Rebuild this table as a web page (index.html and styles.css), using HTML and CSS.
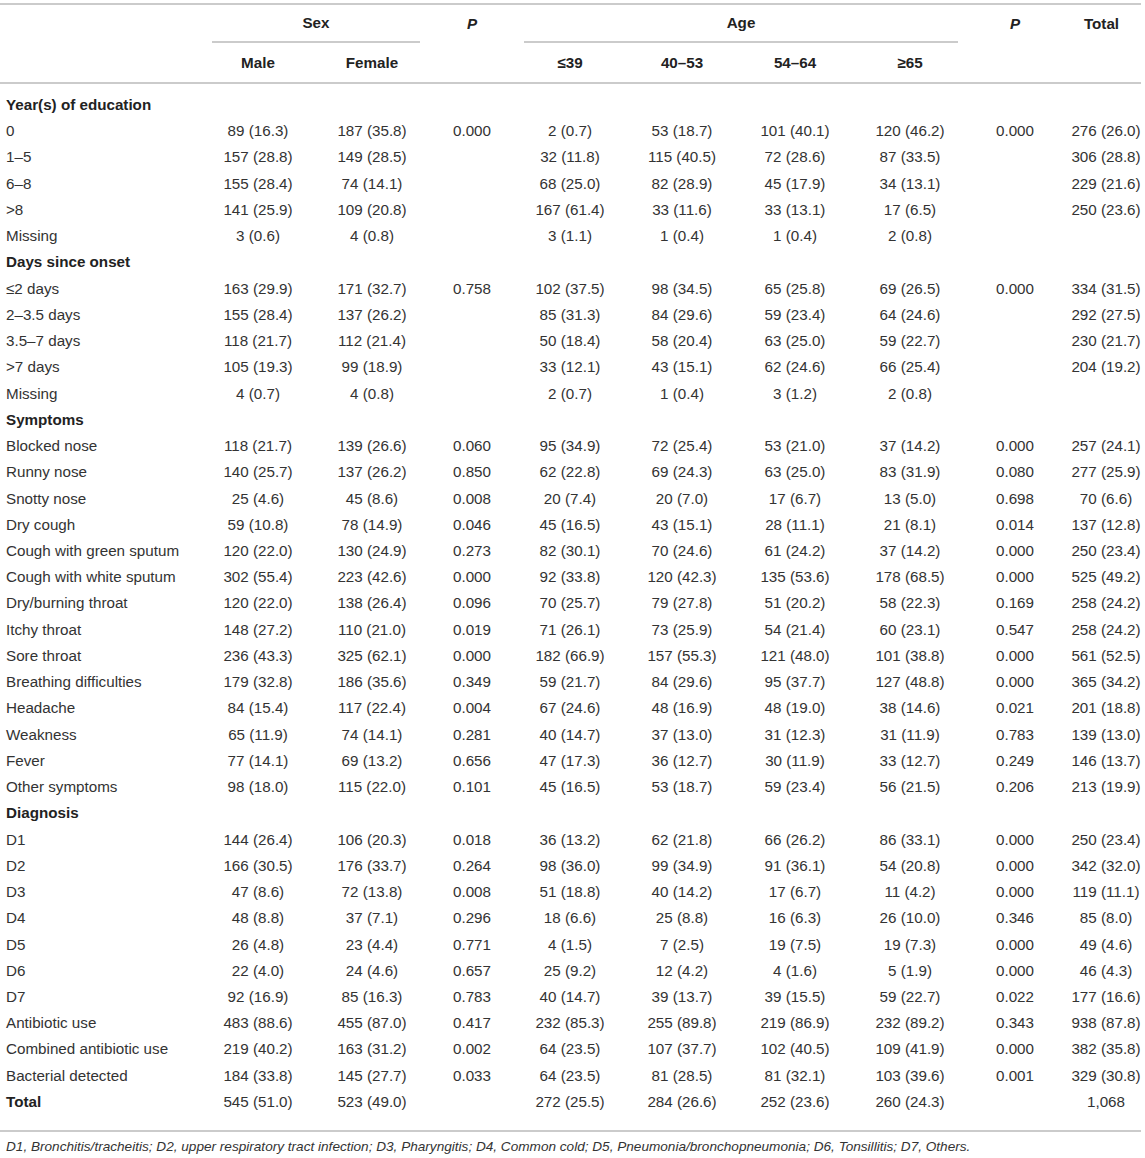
FILE: index.html
```html
<!DOCTYPE html>
<html>
<head>
<meta charset="utf-8">
<link rel="stylesheet" href="styles.css">
</head>
<body>
<div class="page">
<table class="tbl">
<colgroup>
<col class="c-label"><col class="c-male"><col class="c-female"><col class="c-p"><col class="c-a1"><col class="c-a2"><col class="c-a3"><col class="c-a4"><col class="c-p2"><col class="c-tot">
</colgroup>
<thead>
<tr class="h1">
<th class="empty" rowspan="2"></th>
<th colspan="2"><div class="grp">Sex</div></th>
<th rowspan="2" class="top"><i>P</i></th>
<th colspan="4"><div class="grp">Age</div></th>
<th rowspan="2" class="top"><i>P</i></th>
<th rowspan="2" class="top tot">Total</th>
</tr>
<tr class="h2">
<th>Male</th><th>Female</th>
<th>≤39</th><th>40–53</th><th>54–64</th><th>≥65</th>
</tr>
</thead>
<tbody>
<tr class="sec first"><td colspan="10">Year(s) of education</td></tr>
<tr><td>0</td><td>89 (16.3)</td><td>187 (35.8)</td><td>0.000</td><td>2 (0.7)</td><td>53 (18.7)</td><td>101 (40.1)</td><td>120 (46.2)</td><td>0.000</td><td class="tot">276 (26.0)</td></tr>
<tr><td>1–5</td><td>157 (28.8)</td><td>149 (28.5)</td><td></td><td>32 (11.8)</td><td>115 (40.5)</td><td>72 (28.6)</td><td>87 (33.5)</td><td></td><td class="tot">306 (28.8)</td></tr>
<tr><td>6–8</td><td>155 (28.4)</td><td>74 (14.1)</td><td></td><td>68 (25.0)</td><td>82 (28.9)</td><td>45 (17.9)</td><td>34 (13.1)</td><td></td><td class="tot">229 (21.6)</td></tr>
<tr><td>&gt;8</td><td>141 (25.9)</td><td>109 (20.8)</td><td></td><td>167 (61.4)</td><td>33 (11.6)</td><td>33 (13.1)</td><td>17 (6.5)</td><td></td><td class="tot">250 (23.6)</td></tr>
<tr><td>Missing</td><td>3 (0.6)</td><td>4 (0.8)</td><td></td><td>3 (1.1)</td><td>1 (0.4)</td><td>1 (0.4)</td><td>2 (0.8)</td><td></td><td class="tot"></td></tr>
<tr class="sec"><td colspan="10">Days since onset</td></tr>
<tr><td>≤2 days</td><td>163 (29.9)</td><td>171 (32.7)</td><td>0.758</td><td>102 (37.5)</td><td>98 (34.5)</td><td>65 (25.8)</td><td>69 (26.5)</td><td>0.000</td><td class="tot">334 (31.5)</td></tr>
<tr><td>2–3.5 days</td><td>155 (28.4)</td><td>137 (26.2)</td><td></td><td>85 (31.3)</td><td>84 (29.6)</td><td>59 (23.4)</td><td>64 (24.6)</td><td></td><td class="tot">292 (27.5)</td></tr>
<tr><td>3.5–7 days</td><td>118 (21.7)</td><td>112 (21.4)</td><td></td><td>50 (18.4)</td><td>58 (20.4)</td><td>63 (25.0)</td><td>59 (22.7)</td><td></td><td class="tot">230 (21.7)</td></tr>
<tr><td>&gt;7 days</td><td>105 (19.3)</td><td>99 (18.9)</td><td></td><td>33 (12.1)</td><td>43 (15.1)</td><td>62 (24.6)</td><td>66 (25.4)</td><td></td><td class="tot">204 (19.2)</td></tr>
<tr><td>Missing</td><td>4 (0.7)</td><td>4 (0.8)</td><td></td><td>2 (0.7)</td><td>1 (0.4)</td><td>3 (1.2)</td><td>2 (0.8)</td><td></td><td class="tot"></td></tr>
<tr class="sec"><td colspan="10">Symptoms</td></tr>
<tr><td>Blocked nose</td><td>118 (21.7)</td><td>139 (26.6)</td><td>0.060</td><td>95 (34.9)</td><td>72 (25.4)</td><td>53 (21.0)</td><td>37 (14.2)</td><td>0.000</td><td class="tot">257 (24.1)</td></tr>
<tr><td>Runny nose</td><td>140 (25.7)</td><td>137 (26.2)</td><td>0.850</td><td>62 (22.8)</td><td>69 (24.3)</td><td>63 (25.0)</td><td>83 (31.9)</td><td>0.080</td><td class="tot">277 (25.9)</td></tr>
<tr><td>Snotty nose</td><td>25 (4.6)</td><td>45 (8.6)</td><td>0.008</td><td>20 (7.4)</td><td>20 (7.0)</td><td>17 (6.7)</td><td>13 (5.0)</td><td>0.698</td><td class="tot">70 (6.6)</td></tr>
<tr><td>Dry cough</td><td>59 (10.8)</td><td>78 (14.9)</td><td>0.046</td><td>45 (16.5)</td><td>43 (15.1)</td><td>28 (11.1)</td><td>21 (8.1)</td><td>0.014</td><td class="tot">137 (12.8)</td></tr>
<tr><td>Cough with green sputum</td><td>120 (22.0)</td><td>130 (24.9)</td><td>0.273</td><td>82 (30.1)</td><td>70 (24.6)</td><td>61 (24.2)</td><td>37 (14.2)</td><td>0.000</td><td class="tot">250 (23.4)</td></tr>
<tr><td>Cough with white sputum</td><td>302 (55.4)</td><td>223 (42.6)</td><td>0.000</td><td>92 (33.8)</td><td>120 (42.3)</td><td>135 (53.6)</td><td>178 (68.5)</td><td>0.000</td><td class="tot">525 (49.2)</td></tr>
<tr><td>Dry/burning throat</td><td>120 (22.0)</td><td>138 (26.4)</td><td>0.096</td><td>70 (25.7)</td><td>79 (27.8)</td><td>51 (20.2)</td><td>58 (22.3)</td><td>0.169</td><td class="tot">258 (24.2)</td></tr>
<tr><td>Itchy throat</td><td>148 (27.2)</td><td>110 (21.0)</td><td>0.019</td><td>71 (26.1)</td><td>73 (25.9)</td><td>54 (21.4)</td><td>60 (23.1)</td><td>0.547</td><td class="tot">258 (24.2)</td></tr>
<tr><td>Sore throat</td><td>236 (43.3)</td><td>325 (62.1)</td><td>0.000</td><td>182 (66.9)</td><td>157 (55.3)</td><td>121 (48.0)</td><td>101 (38.8)</td><td>0.000</td><td class="tot">561 (52.5)</td></tr>
<tr><td>Breathing difficulties</td><td>179 (32.8)</td><td>186 (35.6)</td><td>0.349</td><td>59 (21.7)</td><td>84 (29.6)</td><td>95 (37.7)</td><td>127 (48.8)</td><td>0.000</td><td class="tot">365 (34.2)</td></tr>
<tr><td>Headache</td><td>84 (15.4)</td><td>117 (22.4)</td><td>0.004</td><td>67 (24.6)</td><td>48 (16.9)</td><td>48 (19.0)</td><td>38 (14.6)</td><td>0.021</td><td class="tot">201 (18.8)</td></tr>
<tr><td>Weakness</td><td>65 (11.9)</td><td>74 (14.1)</td><td>0.281</td><td>40 (14.7)</td><td>37 (13.0)</td><td>31 (12.3)</td><td>31 (11.9)</td><td>0.783</td><td class="tot">139 (13.0)</td></tr>
<tr><td>Fever</td><td>77 (14.1)</td><td>69 (13.2)</td><td>0.656</td><td>47 (17.3)</td><td>36 (12.7)</td><td>30 (11.9)</td><td>33 (12.7)</td><td>0.249</td><td class="tot">146 (13.7)</td></tr>
<tr><td>Other symptoms</td><td>98 (18.0)</td><td>115 (22.0)</td><td>0.101</td><td>45 (16.5)</td><td>53 (18.7)</td><td>59 (23.4)</td><td>56 (21.5)</td><td>0.206</td><td class="tot">213 (19.9)</td></tr>
<tr class="sec"><td colspan="10">Diagnosis</td></tr>
<tr><td>D1</td><td>144 (26.4)</td><td>106 (20.3)</td><td>0.018</td><td>36 (13.2)</td><td>62 (21.8)</td><td>66 (26.2)</td><td>86 (33.1)</td><td>0.000</td><td class="tot">250 (23.4)</td></tr>
<tr><td>D2</td><td>166 (30.5)</td><td>176 (33.7)</td><td>0.264</td><td>98 (36.0)</td><td>99 (34.9)</td><td>91 (36.1)</td><td>54 (20.8)</td><td>0.000</td><td class="tot">342 (32.0)</td></tr>
<tr><td>D3</td><td>47 (8.6)</td><td>72 (13.8)</td><td>0.008</td><td>51 (18.8)</td><td>40 (14.2)</td><td>17 (6.7)</td><td>11 (4.2)</td><td>0.000</td><td class="tot">119 (11.1)</td></tr>
<tr><td>D4</td><td>48 (8.8)</td><td>37 (7.1)</td><td>0.296</td><td>18 (6.6)</td><td>25 (8.8)</td><td>16 (6.3)</td><td>26 (10.0)</td><td>0.346</td><td class="tot">85 (8.0)</td></tr>
<tr><td>D5</td><td>26 (4.8)</td><td>23 (4.4)</td><td>0.771</td><td>4 (1.5)</td><td>7 (2.5)</td><td>19 (7.5)</td><td>19 (7.3)</td><td>0.000</td><td class="tot">49 (4.6)</td></tr>
<tr><td>D6</td><td>22 (4.0)</td><td>24 (4.6)</td><td>0.657</td><td>25 (9.2)</td><td>12 (4.2)</td><td>4 (1.6)</td><td>5 (1.9)</td><td>0.000</td><td class="tot">46 (4.3)</td></tr>
<tr><td>D7</td><td>92 (16.9)</td><td>85 (16.3)</td><td>0.783</td><td>40 (14.7)</td><td>39 (13.7)</td><td>39 (15.5)</td><td>59 (22.7)</td><td>0.022</td><td class="tot">177 (16.6)</td></tr>
<tr><td>Antibiotic use</td><td>483 (88.6)</td><td>455 (87.0)</td><td>0.417</td><td>232 (85.3)</td><td>255 (89.8)</td><td>219 (86.9)</td><td>232 (89.2)</td><td>0.343</td><td class="tot">938 (87.8)</td></tr>
<tr><td>Combined antibiotic use</td><td>219 (40.2)</td><td>163 (31.2)</td><td>0.002</td><td>64 (23.5)</td><td>107 (37.7)</td><td>102 (40.5)</td><td>109 (41.9)</td><td>0.000</td><td class="tot">382 (35.8)</td></tr>
<tr><td>Bacterial detected</td><td>184 (33.8)</td><td>145 (27.7)</td><td>0.033</td><td>64 (23.5)</td><td>81 (28.5)</td><td>81 (32.1)</td><td>103 (39.6)</td><td>0.001</td><td class="tot">329 (30.8)</td></tr>
<tr class="last"><td class="b">Total</td><td>545 (51.0)</td><td>523 (49.0)</td><td></td><td>272 (25.5)</td><td>284 (26.6)</td><td>252 (23.6)</td><td>260 (24.3)</td><td></td><td class="tot">1,068</td></tr>
</tbody>
</table>
<p class="note">D1, Bronchitis/tracheitis; D2, upper respiratory tract infection; D3, Pharyngitis; D4, Common cold; D5, Pneumonia/bronchopneumonia; D6, Tonsillitis; D7, Others.</p>
</div>
</body>
</html>
```

FILE: styles.css
```css
html, body {
  margin: 0;
  padding: 0;
  background: #ffffff;
}
.page {
  padding-top: 3px;
  width: 1141px;
  font-family: "Liberation Sans", Arial, Helvetica, sans-serif;
  color: #333333;
}
.tbl {
  width: 1141px;
  border-collapse: collapse;
  table-layout: fixed;
  font-size: 15.2px;
}
.c-label { width: 202px; }
.c-male { width: 112px; }
.c-female { width: 116px; }
.c-p { width: 84px; }
.c-a1 { width: 112px; }
.c-a2 { width: 112px; }
.c-a3 { width: 114px; }
.c-a4 { width: 116px; }
.c-p2 { width: 94px; }
.c-tot { width: 79px; }

.tbl thead tr.h1 th {
  border-top: 2px solid #cbcbcb;
  padding: 0;
  line-height: 38px;
  vertical-align: top;
  font-weight: bold;
  color: #222222;
  text-align: center;
}
.tbl thead tr.h1 th.empty,
.tbl thead tr.h1 th.top {
  border-bottom: 2px solid #cbcbcb;
}
.grp {
  margin: 0 10px;
  line-height: 36px;
  border-bottom: 2px solid #cbcbcb;
}
.tbl thead tr.h2 th {
  padding: 0;
  line-height: 39px;
  font-weight: bold;
  color: #222222;
  text-align: center;
  border-bottom: 2px solid #cbcbcb;
}
.tbl th.tot,
.tbl td.tot {
  padding-left: 9px;
}
.tbl tbody td {
  padding: 0;
  line-height: 26.24px;
  text-align: center;
  white-space: nowrap;
}
.tbl tbody td:first-child {
  text-align: left;
  padding-left: 6px;
}
.tbl tbody tr.sec td {
  font-weight: bold;
  color: #222222;
}
.tbl tbody tr.first td {
  padding-top: 8px;
}
.tbl tbody tr.last td {
  padding-bottom: 15px;
  border-bottom: 2px solid #cbcbcb;
}
.tbl td.b {
  font-weight: bold;
  color: #222222;
}
.note {
  margin: 0;
  padding: 6px 0 0 6px;
  font-size: 13.6px;
  font-style: italic;
  line-height: 18px;
  white-space: nowrap;
}
```
